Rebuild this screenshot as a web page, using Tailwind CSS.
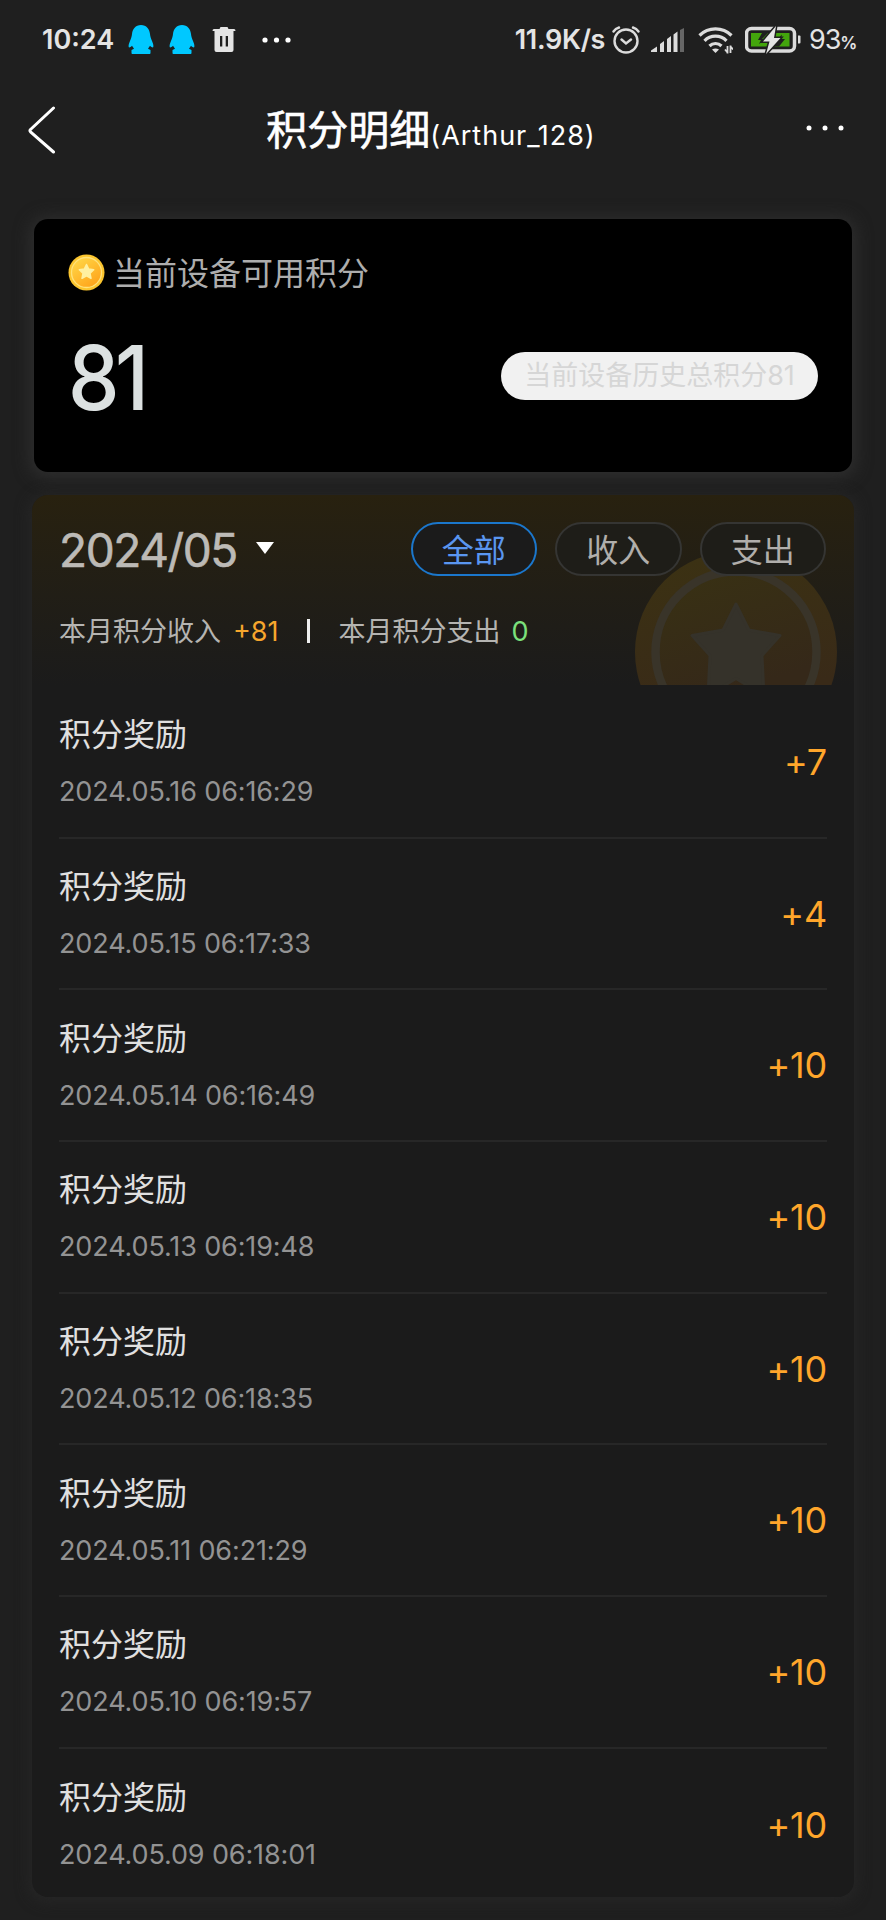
<!DOCTYPE html>
<html lang="zh-CN">
<head>
  <meta charset="UTF-8" />
  <meta name="viewport" content="width=device-width, initial-scale=1.0" />
  <title>积分明细</title>
  <script src="https://cdn.jsdelivr.net/npm/@tailwindcss/browser@4"></script>
</head>
<body class="bg-[#1f1f1f] w-[886px] h-[1920px] overflow-hidden font-['Inter','Noto_Sans_CJK_SC',sans-serif] text-[#dedede]">

  <!-- Статус-бар -->
  <div class="flex items-center h-20 pl-[42px] pr-[30px] text-[#e4e4e4]">
    <span class="w-[72px] text-[27px] font-semibold whitespace-nowrap">10:24</span>
    <svg class="ml-[14px] w-[26px] h-[30px]" viewBox="0 0 26 30"><path fill="#00c8ff" d="M13 0C7.500 0 4.500 4 4 9c-.2 2.500-1 4.500-2 7-1 2.300-1.700 4.500-1.300 6 .3.900 1.800.3 3.300-1.200l2 3-2.500 1.200V28c0 .6.500 1 1.200 1h16.600c.7 0 1.200-.4 1.200-1v-3L20 23.800l2-3c1.500 1.500 3 2.100 3.300 1.200.4-1.500-.3-3.700-1.300-6-1-2.500-1.800-4.500-2-7-.5-5-3.500-9-9-9z"/></svg>
    <svg class="ml-[15px] w-[26px] h-[30px]" viewBox="0 0 26 30"><path fill="#00c8ff" d="M13 0C7.500 0 4.500 4 4 9c-.2 2.500-1 4.500-2 7-1 2.300-1.700 4.500-1.300 6 .3.900 1.800.3 3.300-1.200l2 3-2.500 1.200V28c0 .6.500 1 1.200 1h16.600c.7 0 1.200-.4 1.200-1v-3L20 23.800l2-3c1.500 1.500 3 2.100 3.300 1.200.4-1.500-.3-3.700-1.300-6-1-2.500-1.800-4.500-2-7-.5-5-3.500-9-9-9z"/></svg>
    <svg class="ml-[17px] w-6 h-[26px]" viewBox="0 0 24 26" fill="#e4e4e4"><path fill-rule="evenodd" d="M8.500 0h7l1 2H22q1.500 0 1.500 2H.500q0-2 1.500-2h5.500zM2.500 4h19v19a2 2 0 0 1-2 2h-15a2 2 0 0 1-2-2zM8 9v10.500h2.300V9zM13.700 9v10.500H16V9z"/></svg>
    <svg class="ml-[25px] w-[30px] h-2" viewBox="0 0 30 8" fill="#fff"><circle cx="4" cy="4" r="2.600"/><circle cx="15.500" cy="4" r="2.600"/><circle cx="27" cy="4" r="2.600"/></svg>

    <span class="ml-auto text-[27px] font-semibold tracking-[-0.3px]">11.9K/s</span>
    <svg class="ml-[7px] w-7 h-7" viewBox="0 0 28 28" fill="none" stroke="#dcdcdc" stroke-width="2.400" stroke-linecap="round"><circle cx="14" cy="15" r="11.500"/><path d="M1.500 5.500Q3.500 2.500 7 1.500M26.500 5.500Q24.500 2.500 21 1.500M9.500 13.500l4.500 4 5-4"/></svg>
    <svg class="ml-[11px] w-[34px] h-6" viewBox="0 0 34 24" fill="#dcdcdc"><path d="M0 24v-1.500L6 18.500V24zM9 16l4-3v11H9zM16 11l4-3v16h-4zM22.500 6.500l4-3V24h-4z"/><path fill="#666" d="M29 2l4-2v24h-4z"/></svg>
    <svg class="ml-[13px] w-[35px] h-[27px]" viewBox="0 0 35 27" fill="none" stroke="#dcdcdc" stroke-width="3.200"><path d="M1.500 8.500a22.800 22.800 0 0 1 32 0M6.500 13.800a15.500 15.500 0 0 1 22 0M11.500 19a8.500 8.500 0 0 1 12 0"/><path fill="#dcdcdc" stroke="none" d="M14 22.500q3.500-2 7 0L17.500 26z"/><path stroke-width="1.800" d="M29.500 26.500v-7.500M29.500 25.500l-2.500-3M32.500 18.500V26M32.500 19.500l2.500 3"/></svg>
    <svg class="ml-[12px] w-14 h-7" viewBox="0 0 56 28"><rect x="1.500" y="2.500" width="48" height="22.500" rx="5" fill="none" stroke="#dcdcdc" stroke-width="3.500"/><rect x="6" y="7" width="38.500" height="13.500" fill="#43a50c"/><path fill="#1f1f1f" d="M17 7h6l-6 6h4l-7 5 2-4h-3zM34 20.500h-6l6-6h-3l6-6-1 4.500h4z"/><path fill="#e4e4e4" stroke="#1f1f1f" stroke-width="3" paint-order="stroke" d="M31 0L18 15.500h6.500L21 28l14.500-16h-6.500z"/><path fill="#dcdcdc" d="M53 9.500h1.500a1 1 0 0 1 1 1v6a1 1 0 0 1-1 1H53z"/></svg>
    <span class="ml-[8px] text-[27px] tracking-[-1.2px] whitespace-nowrap">93<span class="text-[17px] font-semibold">%</span></span>
  </div>

  <!-- Заголовок -->
  <div class="flex items-center justify-between h-[100px] pl-7 pr-[42px] text-white">
    <svg class="w-7 h-12" viewBox="0 0 28 48" fill="none" stroke="#fff" stroke-width="3" stroke-linecap="round" stroke-linejoin="round"><path d="M25.500 2L2.500 23.500q-1 1.200 0 2.300L25.500 46"/></svg>
    <h1 class="flex items-baseline mt-px text-[41px] whitespace-nowrap [-webkit-text-stroke:0.6px_#fff]">积分明细<span class="text-[27px] tracking-[1px] [-webkit-text-stroke:0]">(Arthur_128)</span></h1>
    <svg class="w-[38px] h-2 -mt-1" viewBox="0 0 38 8" fill="#fff"><circle cx="3" cy="4" r="2.500"/><circle cx="19" cy="4" r="2.500"/><circle cx="35" cy="4" r="2.500"/></svg>
  </div>

  <!-- Текущие баллы -->
  <div class="mt-[39px] mx-[34px] h-[253px] rounded-[14px] bg-black shadow-[0_2px_16px_4px_#2e2e2e] px-[34px] pt-[33px]">
    <div class="flex items-center gap-2 h-10">
      <svg class="w-[37px] h-[37px]" viewBox="0 0 37 37">
        <defs><linearGradient id="coin" x1="0" y1="0" x2="0.700" y2="1"><stop offset="0" stop-color="#ffdc4c"/><stop offset="1" stop-color="#ffa41a"/></linearGradient></defs>
        <circle cx="18.500" cy="18.500" r="18" fill="#fbc52e"/>
        <circle cx="18.500" cy="18.500" r="15" fill="url(#coin)" stroke="#ffe27a" stroke-width="1.300"/>
        <path fill="#fff0a0" stroke="#fff0a0" stroke-width="1.500" stroke-linejoin="round" d="M18.500 10.500l2.200 4.600 5 .7-3.700 3.500 1 5-4.500-2.500-4.500 2.500 1-5-3.700-3.500 5-.7z"/>
      </svg>
      <span class="mt-[3px] text-[32px] text-[#adadad]">当前设备可用积分</span>
    </div>
    <div class="flex items-center justify-between mt-[34px] h-[100px]">
      <span class="mt-[3px] text-[89px] font-medium tracking-[-5px] text-[#dce1e1] origin-left scale-x-[0.92]">81</span>
      <span class="flex items-center justify-center w-[317px] h-12 rounded-full bg-[#f1f1f1] text-[27px] text-[#d6d6d6]"><span class="mt-px">当前设备历史总积分81</span></span>
    </div>
  </div>

  <!-- История -->
  <div class="mt-[23px] mx-8 h-[1402px] rounded-2xl bg-[#1b1b1b] shadow-[0_2px_14px_3px_#262626] overflow-hidden">
    <div class="relative h-[190px] pt-[27px] pl-[27px] pr-7 overflow-hidden bg-linear-to-b from-[#28210f] to-[#1b1b1b]">
      <svg class="absolute left-[602px] top-[55px] w-[204px] h-[204px]" viewBox="0 0 204 204">
        <defs>
          <linearGradient id="rim" x1="0.500" y1="0" x2="0.700" y2="1"><stop offset="0" stop-color="#3b3113"/><stop offset="0.700" stop-color="#392a18"/></linearGradient>
          <linearGradient id="face" x1="0.400" y1="0" x2="0.700" y2="1"><stop offset="0" stop-color="#383014"/><stop offset="0.700" stop-color="#352819"/></linearGradient>
        </defs>
        <circle cx="102" cy="102" r="101" fill="url(#rim)"/>
        <circle cx="102" cy="102" r="80.500" fill="url(#face)" stroke="#393429" stroke-width="8.500"/>
        <path fill="#35322a" stroke="#35322a" stroke-width="3" stroke-linejoin="round" d="M102 54l13 26 31 5.500-18 20 2 40-28-17-28 17 2-40-18-20L89 80z"/>
      </svg>
      <div class="relative flex items-center h-[54px]">
        <span class="mt-[3px] text-[46px] tracking-[-1.4px] text-[#bcbab6] [-webkit-text-stroke:0.6px_#bcbab6]">2024/05</span>
        <svg class="ml-[19px] -mt-[3px] w-[18px] h-3" viewBox="0 0 18 12"><path fill="#fff" d="M0 0h18L9 12z"/></svg>
        <div class="flex gap-[18px] ml-auto text-[32px] text-[#b0aeab]">
          <span class="flex items-center justify-center w-[126.500px] h-[54px] pt-[3px] rounded-full border-2 border-[#1b77cc] bg-[#1b1b1b] text-[#5a96f0]">全部</span>
          <span class="flex items-center justify-center w-[126.500px] h-[54px] pt-[3px] rounded-full border-2 border-[#353533] bg-[#1e1d18]">收入</span>
          <span class="flex items-center justify-center w-[126.500px] h-[54px] pt-[3px] rounded-full border-2 border-[#353533] bg-[#1e1d18]">支出</span>
        </div>
      </div>
      <div class="relative flex items-center mt-[36px] h-10 text-[27px] text-[#b5b4b1]">
        <span>本月积分收入</span>
        <span class="ml-3 text-[#f7a62d]">+81</span>
        <span class="ml-[28px] mr-[29px] -mt-[2px] w-[3px] h-6 bg-[#eee]"></span>
        <span>本月积分支出</span>
        <span class="ml-[11px] text-[#7be07b]">0</span>
      </div>
    </div>
    <div id="list" class="pt-[2px] px-[27px]"></div>
  </div>

  <script>
    const records = [
      ['2024.05.16 06:16:29', '+7'],
      ['2024.05.15 06:17:33', '+4'],
      ['2024.05.14 06:16:49', '+10'],
      ['2024.05.13 06:19:48', '+10'],
      ['2024.05.12 06:18:35', '+10'],
      ['2024.05.11 06:21:29', '+10'],
      ['2024.05.10 06:19:57', '+10'],
      ['2024.05.09 06:18:01', '+10'],
    ];
    document.getElementById('list').innerHTML = records.map(([time, points]) => `
      <div class="flex items-center justify-between h-[151.700px] border-b-2 border-[#272727] last:border-b-0">
        <div class="pt-[4px]">
          <div class="h-12 leading-[48px] text-[32px] text-[#e0e0e0]">积分奖励</div>
          <div class="mt-[9px] h-12 leading-[48px] text-[27px] tracking-[-0.130px] text-[#939393]">${time}</div>
        </div>
        <span class="text-[36px] text-[#ffa62b] tracking-[-0.200px]">${points}</span>
      </div>`).join('');
  </script>
</body>
</html>
